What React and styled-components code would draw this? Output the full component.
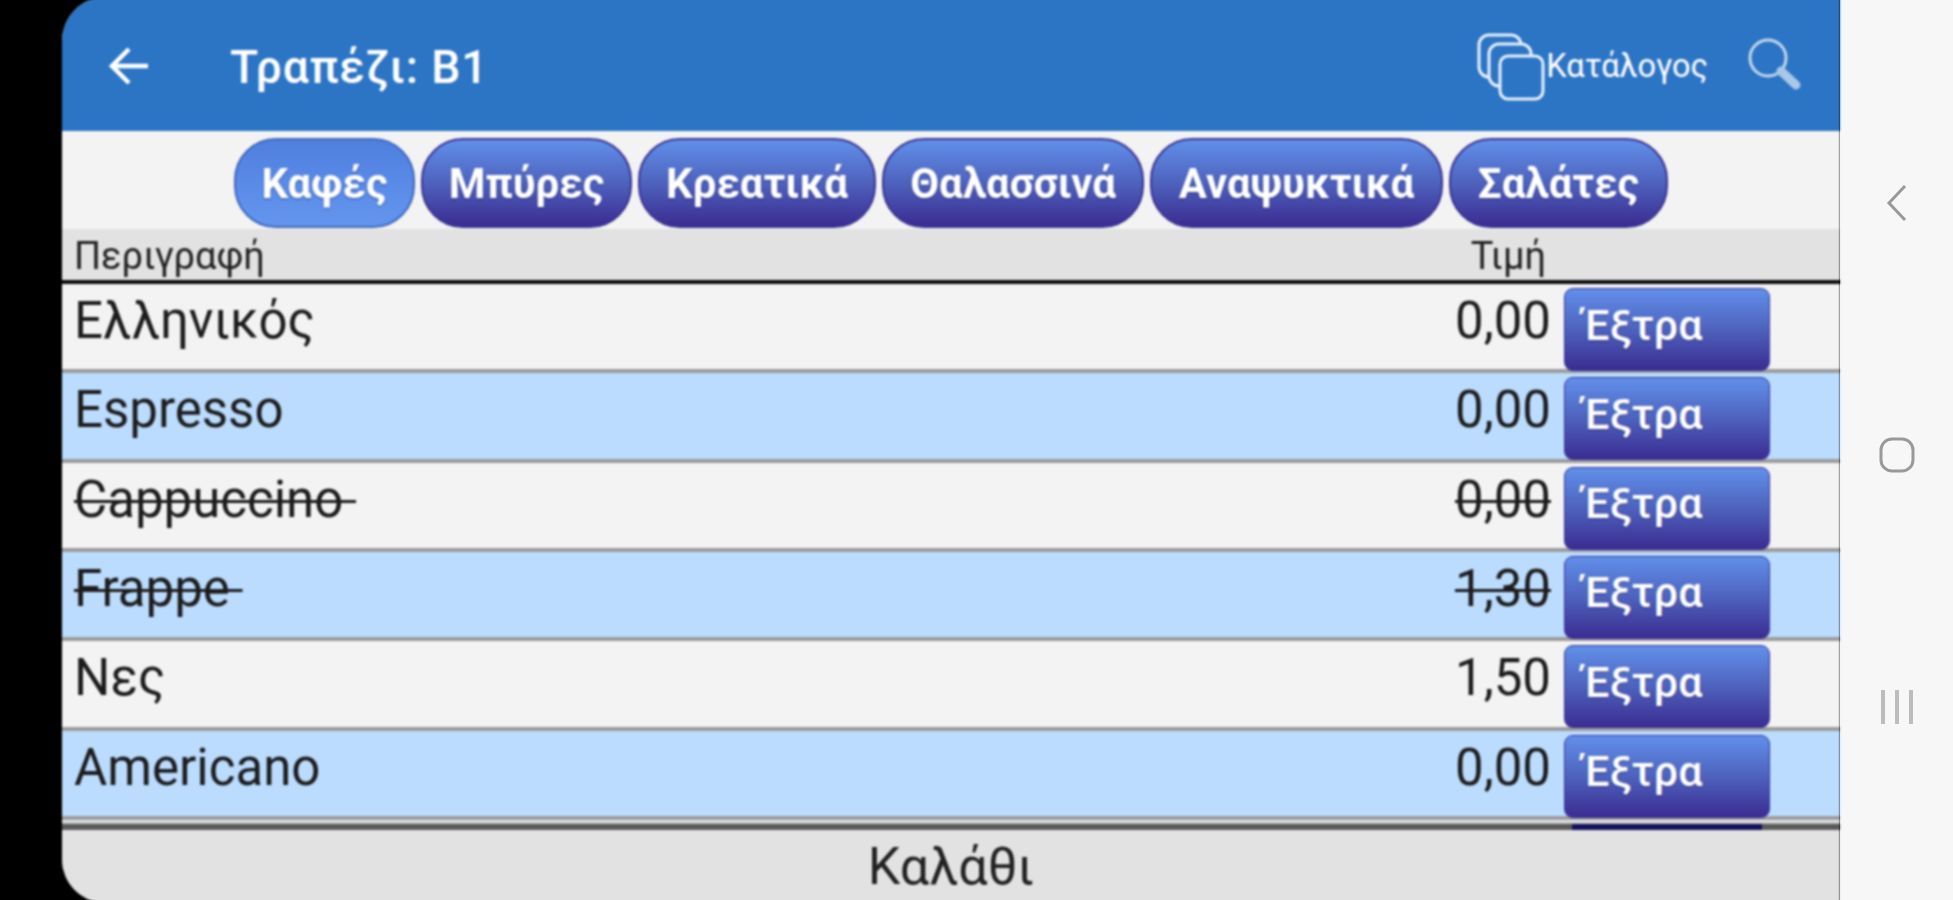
import React from "react";
import styled, { createGlobalStyle } from "styled-components";

const categories = [
  { label: "Καφές", width: 181, active: true },
  { label: "Μπύρες", width: 211 },
  { label: "Κρεατικά", width: 238 },
  { label: "Θαλασσινά", width: 262 },
  { label: "Αναψυκτικά", width: 293 },
  { label: "Σαλάτες", width: 219 },
];

const items = [
  { name: "Ελληνικός", price: "0,00" },
  { name: "Espresso", price: "0,00" },
  { name: "Cappuccino\u00a0", price: "0,00", off: true },
  { name: "Frappe\u00a0", price: "1,30", off: true },
  { name: "Νες", price: "1,50" },
  { name: "Americano", price: "0,00" },
];

const GlobalStyle = createGlobalStyle`
  html, body {
    margin: 0;
    padding: 0;
    height: 900px;
    overflow: hidden;
    background: #000;
  }
  * {
    box-sizing: border-box;
  }
`;

const Page = styled.div`
  display: flex;
  height: 900px;
  padding-left: 62px;
  background: #000;
  font-family: Roboto, "Noto Sans", sans-serif;
  overflow: hidden;
`;

// the reference is an upscaled capture, so everything in the app area is soft
const Screen = styled.main`
  display: flex;
  flex-direction: column;
  width: 1778px;
  height: 906px;
  margin-top: -3px;
  background: #f3f3f3;
  border-radius: 44px 0 0 44px;
  overflow: hidden;
  filter: blur(1.1px);
`;

const Header = styled.header`
  display: flex;
  align-items: center;
  height: 134px;
  padding: 3px 38px 0 46px;
  background: #2c74c4;
  color: #fff;
  flex-shrink: 0;
`;

const BackIcon = styled.svg`
  width: 42px;
  height: 40px;
`;

const Title = styled.h1`
  flex: 1;
  margin: 2px 0 0 80px;
  font-size: 46px;
  font-weight: 500;
  letter-spacing: 1px;
`;

const Catalog = styled.div`
  display: flex;
  align-items: center;
  margin-right: 38px;
  font-size: 32.5px;
`;

const CatalogIcon = styled.svg`
  width: 70px;
  height: 70px;
  margin-top: 2px;
`;

const SearchIcon = styled.svg`
  width: 56px;
  height: 56px;
  margin-top: -4px;
`;

const Tabs = styled.nav`
  display: flex;
  justify-content: center;
  gap: 6px;
  height: 98px;
  padding-top: 7px;
  flex-shrink: 0;
`;

const Tab = styled.button`
  width: ${(p) => p.$width}px;
  height: 90px;
  padding: 0;
  border: 2px solid ${(p) => (p.$active ? "#3f68bd" : "#3a3494")};
  border-radius: 42px;
  background: ${(p) =>
    p.$active
      ? "linear-gradient(#4f80df, #6495ee)"
      : "linear-gradient(#6190ea, #4e62bd 50%, #3b2c92)"};
  color: #fff;
  font-family: inherit;
  font-size: 42px;
  font-weight: 700;
  text-shadow: 0 1px 2px rgba(30, 30, 80, 0.5);
`;

const TableHead = styled.div`
  display: flex;
  justify-content: space-between;
  align-items: flex-end;
  height: 55px;
  padding: 0 294px 0 12px;
  background: #e2e2e2;
  border-bottom: 4px solid #0c0c0c;
  color: #222;
  font-size: 38px;
  line-height: 48px;
  flex-shrink: 0;
`;

const List = styled.div`
  flex: 1;
  overflow: hidden;
`;

const Row = styled.div`
  display: grid;
  grid-template-columns: 1fr auto 206px;
  column-gap: 13px;
  height: 89.33px;
  padding: 4px 70px 0 12px;
  background: ${(p) => (p.$odd ? "#bbdcff" : "#f3f3f3")};
  border-bottom: 4px solid #9c9c9c;
  color: #1c1c1c;
  font-size: 51px;
`;

const Name = styled.span`
  line-height: 66px;
  text-decoration: ${(p) => (p.$off ? "line-through" : "none")};
  text-decoration-thickness: 3px;
`;

const Price = styled(Name)``;

const ExtraButton = styled.button`
  height: 83px;
  padding: 0 0 10px 18px;
  border: 1px solid #38349a;
  border-radius: 9px;
  background: linear-gradient(#6190ea, #4e62bd 50%, #3b2c92);
  color: #fff;
  font-family: inherit;
  font-size: 43px;
  font-weight: 500;
  text-align: left;
  text-shadow: 0 1px 2px rgba(30, 30, 80, 0.5);
`;

const Peek = styled.div`
  display: flex;
  justify-content: flex-end;
  height: 12px;
  padding: 2px 78px 0 0;
  background: linear-gradient(#e8e8e8 0 2px, #bdbdbd 2px 4px, #5a5a5a 4px);
`;

const PeekButton = styled.div`
  width: 190px;
  height: 10px;
  background: linear-gradient(#bdbdbd 0 2px, #14105c 2px);
`;

const Footer = styled.footer`
  display: flex;
  align-items: center;
  justify-content: center;
  height: 73px;
  padding-bottom: 0;
  background: #e2e2e2;
  color: #222;
  font-size: 52px;
  flex-shrink: 0;
`;

const NavBar = styled.aside`
  display: flex;
  flex-direction: column;
  align-items: center;
  gap: 212px;
  flex: 1;
  padding-top: 183px;
  background: #f7f7f7;
`;

const NavIcon = styled.svg`
  width: 44px;
  height: 40px;
  fill: none;
  stroke: ${(p) => (p.$light ? "#bcbcbc" : "#999")};
  stroke-width: ${(p) => (p.$light ? 4 : 3)};
`;

const App = () => {
  return (
    <Page>
      <GlobalStyle />
      <Screen>
        <Header>
          <BackIcon viewBox="0 0 42 40" fill="none" stroke="#fff" strokeWidth="4.5">
            <path d="M40 20H5M21 3 4 20l17 17" />
          </BackIcon>
          <Title>Τραπέζι: B1</Title>
          <Catalog>
            <CatalogIcon viewBox="0 0 70 70" fill="#2c74c4" stroke="#e8f1fb" strokeWidth="3">
              <rect x="3" y="3" width="42" height="42" rx="10" />
              <rect x="13" y="12" width="42" height="42" rx="10" />
              <rect x="24" y="24" width="43" height="43" rx="8" />
            </CatalogIcon>
            Κατάλογος
          </Catalog>
          <SearchIcon viewBox="0 0 56 56" fill="none">
            <circle cx="22" cy="22" r="18" stroke="#c3d8ee" strokeWidth="3" />
            <path d="M35 35 50 49" stroke="#a9c8e8" strokeWidth="9" strokeLinecap="round" />
          </SearchIcon>
        </Header>

        <Tabs>
          {categories.map((c) => (
            <Tab key={c.label} $width={c.width} $active={c.active}>
              {c.label}
            </Tab>
          ))}
        </Tabs>

        <TableHead>
          <span>Περιγραφή</span>
          <span>Τιμή</span>
        </TableHead>

        <List>
          {items.map((item, i) => (
            <Row key={item.name} $odd={i % 2 === 1}>
              <Name $off={item.off}>{item.name}</Name>
              <Price $off={item.off}>{item.price}</Price>
              <ExtraButton>Έξτρα</ExtraButton>
            </Row>
          ))}
          <Peek>
            <PeekButton />
          </Peek>
        </List>

        <Footer>Καλάθι</Footer>
      </Screen>

      <NavBar>
        <NavIcon viewBox="0 0 44 40">
          <path d="M30 3 14 20l16 17" />
        </NavIcon>
        <NavIcon viewBox="0 0 44 40">
          <rect x="6" y="4" width="32" height="32" rx="11" />
        </NavIcon>
        <NavIcon viewBox="0 0 44 40" $light>
          <path d="M8 3v34M22 3v34M36 3v34" />
        </NavIcon>
      </NavBar>
    </Page>
  );
};

export default App;
